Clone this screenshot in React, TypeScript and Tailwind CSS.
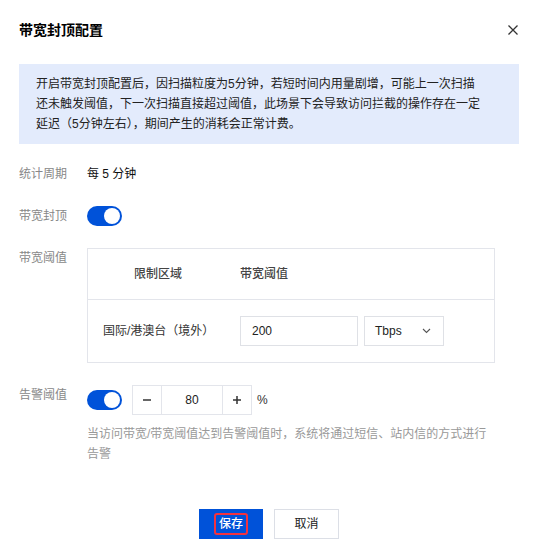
import { useState } from "react";

function Toggle({ on }: { on: boolean }) {
  return (
    <div
      className={`flex items-center w-[35px] h-[20px] rounded-full px-[2px] ${
        on ? "bg-[#0052d9] justify-end" : "bg-[#dcdcdc] justify-start"
      }`}
    >
      <div className="w-[16px] h-[16px] rounded-full bg-white" />
    </div>
  );
}

function Row({ label, children, top = false }: { label: string; children: React.ReactNode; top?: boolean }) {
  return (
    <div className={`flex ${top ? "items-start" : "items-center"}`}>
      <div className="w-[68px] shrink-0 text-[#888]">{label}</div>
      <div className="flex-1">{children}</div>
    </div>
  );
}

export default function App() {
  const [alarm, setAlarm] = useState(80);

  return (
    <div className="w-[539px] h-[558px] bg-white pl-[19px] pr-[20px] pt-[20px] text-[12px] leading-[20px] font-['Liberation_Sans','Noto_Sans_CJK_SC',sans-serif] text-[#333]">
      {/* Header */}
      <div className="flex items-center justify-between h-[20px]">
        <h2 className="text-[14px] leading-[20px] font-bold text-black">带宽封顶配置</h2>
        <svg width="12" height="12" viewBox="0 0 12 12" className="text-[#333]">
          <path d="M1.5 1.5 L10.5 10.5 M10.5 1.5 L1.5 10.5" stroke="currentColor" strokeWidth="1.3" />
        </svg>
      </div>

      {/* Notice */}
      <div className="mt-[24px] bg-[#e3ebfc] pl-[17px] pr-[35px] py-[10px] text-[#222]">
        开启带宽封顶配置后，因扫描粒度为5分钟，若短时间内用量剧增，可能上一次扫描还未触发阈值，下一次扫描直接超过阈值，此场景下会导致访问拦截的操作存在一定延迟（5分钟左右），期间产生的消耗会正常计费。
      </div>

      {/* Form */}
      <div className="mt-[20px] flex flex-col gap-[22px]">
        <Row label="统计周期">
          <span className="text-[#111]">每 5 分钟</span>
        </Row>

        <Row label="带宽封顶">
          <Toggle on />
        </Row>

        <Row label="带宽阈值" top>
          <div className="w-[408px] border border-[#e3e5eb]">
            <div className="grid grid-cols-[152px_1fr] h-[51px] items-center border-b border-[#e3e5eb] text-[#444] font-medium">
              <div className="pl-[46px]">限制区域</div>
              <div>带宽阈值</div>
            </div>
            <div className="grid grid-cols-[152px_1fr] items-center py-[16px]">
              <div className="pl-[15px] text-[#333]">国际/港澳台（境外）</div>
              <div className="flex gap-[6px]">
                <div className="w-[118px] h-[30px] border border-[#dfe1e6] flex items-center pl-[11px] text-[#222]">
                  200
                </div>
                <div className="w-[80px] h-[30px] border border-[#dfe1e6] flex items-center justify-between pl-[10px] pr-[12px] text-[#222]">
                  <span>Tbps</span>
                  <svg width="9" height="6" viewBox="0 0 9 6">
                    <path d="M1 1 L4.5 4.5 L8 1" fill="none" stroke="#555" strokeWidth="1.1" />
                  </svg>
                </div>
              </div>
            </div>
          </div>
        </Row>

        <Row label="告警阈值" top>
          <div>
            <div className="flex items-center h-[30px]">
              <Toggle on />
              <div className="ml-[10px] flex h-[30px] border border-[#e3e5eb]">
                <button
                  onClick={() => setAlarm(alarm - 1)}
                  className="w-[29px] flex items-center justify-center border-r border-[#e3e5eb]"
                >
                  <svg width="10" height="10" viewBox="0 0 10 10">
                    <path d="M1 5 H9" stroke="#333" strokeWidth="1.5" />
                  </svg>
                </button>
                <div className="w-[60px] flex items-center justify-center text-[#222]">{alarm}</div>
                <button
                  onClick={() => setAlarm(alarm + 1)}
                  className="w-[29px] flex items-center justify-center border-l border-[#e3e5eb]"
                >
                  <svg width="10" height="10" viewBox="0 0 10 10">
                    <path d="M1 5 H9 M5 1 V9" stroke="#333" strokeWidth="1.5" />
                  </svg>
                </button>
              </div>
              <span className="ml-[5px] text-[#333]">%</span>
            </div>
            <p className="mt-[9px] w-[408px] text-[#999]">
              当访问带宽/带宽阈值达到告警阈值时，系统将通过短信、站内信的方式进行告警
            </p>
          </div>
        </Row>
      </div>

      {/* Footer */}
      <div className="mt-[45px] flex justify-center gap-[11px]">
        <button className="w-[64px] h-[30px] bg-[#0052d9] flex items-center justify-center">
          <span className="border-2 border-[#f2323f] rounded-[3px] px-[3px] leading-[18px] font-medium text-white">
            保存
          </span>
        </button>
        <button className="w-[65px] h-[30px] bg-white border border-[#dcdfe6] text-[#222]">取消</button>
      </div>
    </div>
  );
}
